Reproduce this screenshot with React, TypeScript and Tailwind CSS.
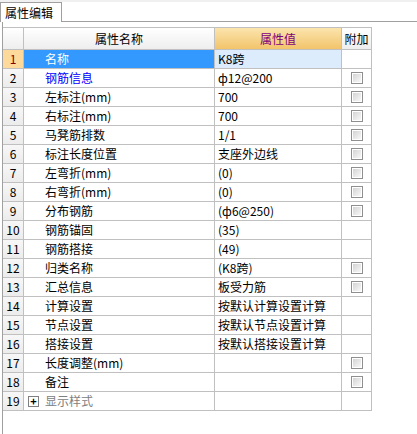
import React from "react";

type Row = { name: string; value: string; check: boolean; blue?: boolean };

const rows: Row[] = [
  { name: "名称", value: "K8跨", check: false },
  { name: "钢筋信息", value: "ф12@200", check: true, blue: true },
  { name: "左标注(mm)", value: "700", check: true },
  { name: "右标注(mm)", value: "700", check: true },
  { name: "马凳筋排数", value: "1/1", check: true },
  { name: "标注长度位置", value: "支座外边线", check: true },
  { name: "左弯折(mm)", value: "(0)", check: true },
  { name: "右弯折(mm)", value: "(0)", check: true },
  { name: "分布钢筋", value: "(ф6@250)", check: true },
  { name: "钢筋锚固", value: "(35)", check: false },
  { name: "钢筋搭接", value: "(49)", check: false },
  { name: "归类名称", value: "(K8跨)", check: true },
  { name: "汇总信息", value: "板受力筋", check: true },
  { name: "计算设置", value: "按默认计算设置计算", check: false },
  { name: "节点设置", value: "按默认节点设置计算", check: false },
  { name: "搭接设置", value: "按默认搭接设置计算", check: false },
  { name: "长度调整(mm)", value: "", check: true },
  { name: "备注", value: "", check: true },
];

function Check() {
  return (
    <div className="h-[12px] w-[12px] border border-[#8f8f8f] bg-white p-[1px]">
      <div className="h-full w-full bg-gradient-to-br from-[#d4d4d4] to-[#f8f8f8]" />
    </div>
  );
}

const cell = "border-r border-b border-[#c0c0c0] h-[19px] flex items-center";

export default function App() {
  return (
    <div
      className="h-[434px] w-[417px] overflow-hidden bg-white text-[12px] leading-none text-black"
      style={{ fontFamily: '"Noto Sans CJK SC", "Liberation Sans", sans-serif' }}
    >
      <div className="h-[2px] bg-[#f0f0f0]" />
      {/* tab strip */}
      <div className="flex h-[20px]">
        <div className="flex w-[62px] items-center border-l border-t border-r border-[#a0a0a0] bg-white pl-[4px]">
          属性编辑
        </div>
        <div className="flex-1 border-b border-[#a0a0a0]" />
      </div>
      <div className="ml-[2px] h-[412px] border-l border-[#a0a0a0] pt-[5px]">
        <div className="grid w-[369px] grid-cols-[21px_191px_127px_30px]">
          {/* header */}
          <div className="h-[23px] border-t border-r border-b border-[#c0c0c0] bg-gradient-to-b from-white to-[#eeeeee]" />
          <div className="flex h-[23px] items-center justify-center border-t border-r border-b border-[#c0c0c0] bg-gradient-to-b from-white to-[#eeeeee]">
            属性名称
          </div>
          <div className="flex h-[23px] items-center justify-center border-t border-r border-b border-[#c0c0c0] bg-gradient-to-b from-[#fbe4ad] to-[#f2c46a] text-[#7f007f]">
            属性值
          </div>
          <div className="flex h-[23px] items-center justify-center border-t border-r border-b border-[#c0c0c0] bg-gradient-to-b from-white to-[#eeeeee]">
            附加
          </div>

          {rows.map((r, i) => {
            const sel = i === 0;
            return (
              <React.Fragment key={i}>
                <div
                  className={`${cell} justify-center ${
                    sel ? "bg-[#fdd99b] text-[#800000]" : "bg-gradient-to-b from-[#f7f7f7] to-[#ececec]"
                  }`}
                >
                  {i + 1}
                </div>
                <div
                  className={`${cell} pl-[21px] ${
                    sel ? "bg-[#3399ff] text-white" : r.blue ? "text-[#0000ff]" : ""
                  }`}
                >
                  {r.name}
                </div>
                <div className={`${cell} pl-[3px] ${sel ? "bg-[#dcecfd]" : ""}`}>{r.value}</div>
                <div className={`${cell} justify-center`}>{r.check && <Check />}</div>
              </React.Fragment>
            );
          })}

          <div className={`${cell} justify-center bg-gradient-to-b from-[#f7f7f7] to-[#ececec]`}>19</div>
          <div className={`${cell} pl-[4px]`}>
            <div className="mr-[6px] flex h-[11px] w-[11px] items-center justify-center border border-[#808080] bg-white text-[11px] font-bold">
              +
            </div>
            <span className="text-[#808080]">显示样式</span>
          </div>
          <div className={cell} />
          <div className={cell} />
        </div>
      </div>
    </div>
  );
}
